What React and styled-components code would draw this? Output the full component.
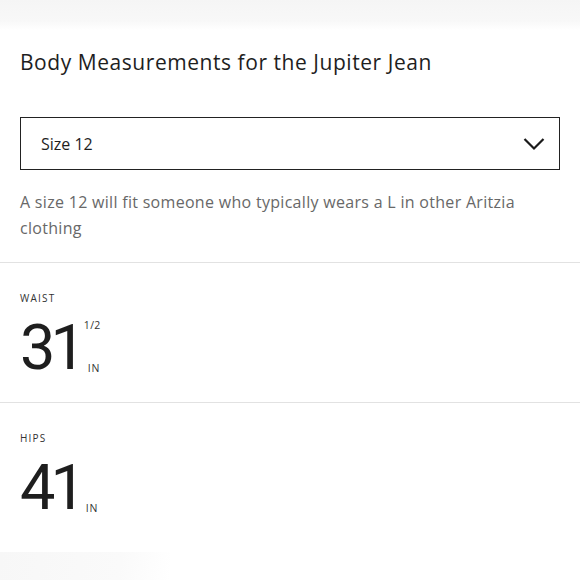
import React from 'react';
import styled, { createGlobalStyle } from 'styled-components';

const GlobalStyle = createGlobalStyle`
    html, body {
        margin: 0;
        padding: 0;
        background: #ffffff;
    }
    body {
        width: 580px;
        height: 580px;
        overflow: hidden;
        font-family: 'Open Sans', 'Lato', sans-serif;
        color: #1c1c1c;
    }
`;

const Page = styled.div`
    position: relative;
    width: 580px;
    height: 580px;
    display: flex;
    flex-direction: column;
    background: #fff;
`;

const TopFade = styled.div`
    height: 30px;
    background: linear-gradient(to bottom, #f5f5f5 0%, #f8f8f8 70%, #ffffff 100%);
`;

const Header = styled.div`
    padding: 18px 20px 0;
`;

const Title = styled.h1`
    margin: 0;
    font-size: 21px;
    font-weight: 400;
    line-height: 28px;
    letter-spacing: 0.55px;
    color: #1e1e1e;
`;

const Select = styled.div`
    margin-top: 41px;
    height: 53px;
    box-sizing: border-box;
    border: 1.5px solid #222;
    display: flex;
    align-items: center;
    justify-content: space-between;
    padding: 0 14px 0 20px;
    font-size: 16px;
    color: #1e1e1e;
    cursor: pointer;
`;

const Note = styled.p`
    margin: 19px 0 0;
    font-size: 16px;
    line-height: 26px;
    letter-spacing: 0.3px;
    color: #686868;
`;

const Divider = styled.hr`
    margin: 0;
    border: 0;
    height: 1px;
    background: #e2e2e2;
`;

const Measure = styled.div`
    padding: 28px 20px 0;
    height: ${({ $height }) => $height}px;
    box-sizing: border-box;
`;

const Label = styled.div`
    font-size: 10px;
    letter-spacing: 1.2px;
    text-transform: uppercase;
    color: #333;
    line-height: 14px;
`;

const Value = styled.div`
    display: flex;
    align-items: stretch;
    margin-top: 17px;
`;

const Number = styled.span`
    font-family: 'Roboto', 'Liberation Sans', sans-serif;
    font-size: 63px;
    line-height: 52px;
    height: 50px;
    letter-spacing: -5px;
    color: #1e1e1e;
`;

const Units = styled.div`
    display: flex;
    flex-direction: column;
    justify-content: ${({ $frac }) => ($frac ? 'space-between' : 'flex-end')};
    padding-left: ${({ $frac }) => ($frac ? '3px' : '5px')};
    font-size: 10.5px;
    line-height: 10px;
    letter-spacing: 0.8px;
    color: #333;
`;

const Fraction = styled.span`
    margin-top: -2px;
    letter-spacing: 0.3px;
`;

const Inch = styled.span`
    padding-left: ${({ $indent }) => ($indent ? '4px' : '0')};
    margin-bottom: -1px;
`;

const BottomFade = styled.div`
    position: absolute;
    left: 0;
    bottom: 0;
    width: 170px;
    height: 28px;
    background: linear-gradient(100deg, #f7f7f7 0%, #fafafa 70%, rgba(255, 255, 255, 0) 100%);
`;

const Chevron = () => (
    <svg width="22" height="14" viewBox="0 0 22 14" fill="none">
        <path d="M1.5 2 L11 11.5 L20.5 2" stroke="#1a1a1a" strokeWidth="2.2" />
    </svg>
);

const measurements = [
    { label: 'Waist', value: '31', fraction: '1/2', height: 139 },
    { label: 'Hips', value: '41', height: 140 },
];

export default function App() {
    return (
        <Page>
            <GlobalStyle />
            <TopFade />
            <Header>
                <Title>Body Measurements for the Jupiter Jean</Title>
                <Select>
                    <span>Size 12</span>
                    <Chevron />
                </Select>
                <Note>
                    A size 12 will fit someone who typically wears a L in other Aritzia clothing
                </Note>
            </Header>
            <div style={{ height: 21 }} />
            {measurements.map((m) => (
                <React.Fragment key={m.label}>
                    <Divider />
                    <Measure $height={m.height}>
                        <Label>{m.label}</Label>
                        <Value>
                            <Number>{m.value}</Number>
                            <Units $frac={!!m.fraction}>
                                {m.fraction && <Fraction>{m.fraction}</Fraction>}
                                <Inch $indent={!!m.fraction}>IN</Inch>
                            </Units>
                        </Value>
                    </Measure>
                </React.Fragment>
            ))}
            <BottomFade />
        </Page>
    );
}
